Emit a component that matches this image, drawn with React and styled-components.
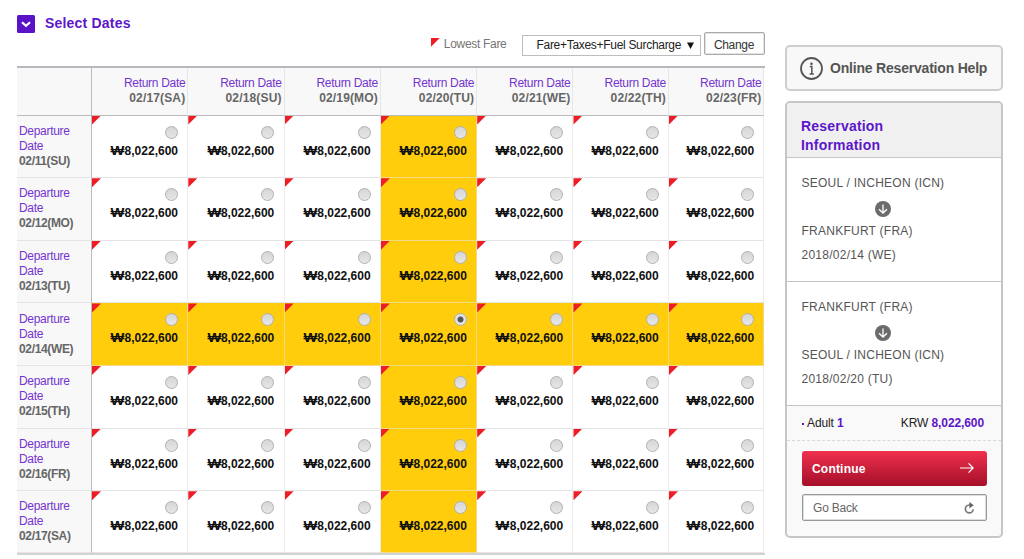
import React, { useState } from 'react';
import styled, { createGlobalStyle, css } from 'styled-components';

const GlobalStyle = createGlobalStyle`
  * {
    box-sizing: border-box;
  }
  body {
    margin: 0;
    background: #fff;
    font-family: "Liberation Sans", Arial, sans-serif;
    font-size: 12px;
    color: #555;
  }
  button {
    font-family: inherit;
    margin: 0;
  }
`;

const Page = styled.div`
  display: flex;
  align-items: flex-start;
  width: 1024px;
  height: 559px;
  padding-left: 17px;
  overflow: hidden;
`;

const Main = styled.main`
  width: 747.5px;
  padding-top: 15px;
`;

const Title = styled.h2`
  display: flex;
  align-items: center;
  gap: 10px;
  height: 17px;
  margin: 0;
  font-size: 14px;
  line-height: 17px;
  letter-spacing: 0.2px;
  color: #5c17c9;
`;

const TitleIcon = styled.svg`
  width: 18px;
  height: 18px;
`;

const Toolbar = styled.div`
  display: flex;
  justify-content: flex-end;
  align-items: flex-start;
  height: 34px;
`;

const Legend = styled.span`
  display: flex;
  gap: 4px;
  margin: 5px 15px 0 0;
  line-height: 14px;
  letter-spacing: -0.3px;
  color: #767676;
`;

const Corner = styled.i`
  width: 9px;
  height: 9px;
  background: #ee1c25;
  clip-path: polygon(0 0, 100% 0, 0 100%);
`;

const LegendCorner = styled(Corner)`
  margin-top: 1px;
`;

const Select = styled.button`
  display: flex;
  align-items: center;
  justify-content: space-between;
  width: 179px;
  height: 21px;
  margin: 3px 3px 0 0;
  padding: 0 6px 1px 14px;
  border: 1px solid #bdbdbd;
  background: #fff;
  font-size: 12px;
  letter-spacing: -0.3px;
  color: #222;
`;

const Arrow = styled.svg`
  width: 7px;
  height: 7px;
`;

const Change = styled.button`
  width: 61px;
  height: 23px;
  padding: 2px 0 0;
  border: 1px solid #aaa;
  border-radius: 2px;
  background: #fff;
  box-shadow: inset 0 0 0 1px #e4e4e4;
  font-size: 12px;
  line-height: 18px;
  letter-spacing: -0.3px;
  color: #333;
`;

const Grid = styled.div`
  display: grid;
  grid-template-columns: 75px repeat(5, 96.3px) repeat(2, 95.5px);
  grid-template-rows: 47.6px repeat(6, 62.6px) 61.4px;
  border-top: 2px solid #b7b7be;
  border-bottom: 2px solid #d2d2d2;
`;

const Label = styled.span`
  letter-spacing: -0.3px;
  color: #7434cf;
`;

const Day = styled.strong`
  letter-spacing: ${(props) => (props.$tight ? '-0.35px' : '0.15px')};
  color: #666;
`;

const ColHead = styled.div`
  display: flex;
  flex-direction: column;
  align-items: flex-end;
  padding: 7.5px 2px 0 0;
  border-right: 1px solid #e6e6e6;
  border-bottom: 1px solid #bbb;
  background: #f8f8f8;
  line-height: 15.5px;
`;

const Blank = styled(ColHead)`
  border-right-color: #bbb;
`;

const RowHead = styled.div`
  display: flex;
  flex-direction: column;
  padding: 8.3px 0 0 2px;
  border-right: 1px solid #bbb;
  border-bottom: 1px solid #e4e4e4;
  background: #f8f8f8;
  line-height: 15px;
`;

const Cell = styled.label`
  position: relative;
  display: flex;
  flex-direction: column;
  align-items: flex-end;
  padding: 10px 9.3px 0 0;
  border-right: 1px solid #ececec;
  border-bottom: 1px solid #e4e4e4;
  ${(props) => props.$active && css`
    border-right-color: #f3d985;
    border-bottom-color: #f3d985;
    background: #ffcd0c;
  `}
`;

const LowMark = styled(Corner)`
  position: absolute;
  top: 0;
  left: 0;
`;

const Radio = styled.input`
  appearance: none;
  width: 13px;
  height: 13px;
  margin: 0;
  border: 1px solid #b0b0b0;
  border-radius: 50%;
  background: linear-gradient(#d6d6d6, #e6e6e6);
  &:checked {
    background: radial-gradient(circle, #555 0 2.6px, #e2e2e2 3.4px);
  }
`;

const Price = styled.strong`
  margin-top: 4px;
  line-height: 16px;
  color: #111;
`;

const Won = styled.span`
  display: inline-block;
  transform: scaleX(1.22);
  transform-origin: right;
`;

const Side = styled.aside`
  display: flex;
  flex-direction: column;
  gap: 10px;
  width: 218px;
  margin: 45px 0 0 20.5px;
`;

const Help = styled.div`
  display: flex;
  align-items: center;
  gap: 7.5px;
  height: 46px;
  padding-left: 12.5px;
  border: 2px solid #cecece;
  border-radius: 5px;
  background: #f8f8f8;
  font-size: 14px;
  font-weight: bold;
  letter-spacing: -0.2px;
  white-space: nowrap;
  color: #555;
`;

const HelpIcon = styled.svg`
  flex: none;
  width: 23px;
  height: 23px;
`;

const Panel = styled.section`
  height: 437px;
  border: 2px solid #c6c6c6;
  border-radius: 5px;
  background: #f9f9f9;
  overflow: hidden;
`;

const PanelTitle = styled.h3`
  height: 55px;
  margin: 0;
  padding: 14px 14px 0;
  border-bottom: 1px solid #c6c6c6;
  background: #f0f0f0;
  font-size: 14px;
  line-height: 18.5px;
  letter-spacing: 0.2px;
  color: #5c17c9;
`;

const Leg = styled.div`
  display: flex;
  flex-direction: column;
  height: 124px;
  padding: 13px 14.5px 0;
  border-bottom: 1px solid #c6c6c6;
  background: #fff;
  line-height: 24px;
  letter-spacing: 0.25px;
  color: #555;
`;

const Down = styled.svg`
  width: 16px;
  height: 16px;
  margin: 6px 0 2px 73.5px;
`;

const Fare = styled.div`
  display: flex;
  justify-content: space-between;
  height: 35px;
  padding: 0 17px 0 14px;
  border-bottom: 1px dashed #d8d8d8;
  line-height: 35px;
  letter-spacing: -0.1px;
  color: #222;
`;

const Bullet = styled.i`
  display: inline-block;
  width: 2px;
  height: 2px;
  margin: 0 3px 2px 1px;
  background: #5c17c9;
`;

const Accent = styled.strong`
  color: #5c17c9;
`;

const Actions = styled.div`
  display: flex;
  flex-direction: column;
  gap: 8px;
  padding: 10px 14.5px;
`;

const Continue = styled.button`
  display: flex;
  align-items: center;
  justify-content: space-between;
  height: 35px;
  padding: 0 13px 0 10.5px;
  border: 0;
  border-radius: 3px;
  background: linear-gradient(#f0304e, #a50f29);
  font-size: 12px;
  font-weight: bold;
  letter-spacing: 0.2px;
  color: #fff;
`;

const Back = styled.button`
  display: flex;
  align-items: center;
  justify-content: space-between;
  height: 27px;
  padding: 0 11px 0 10.5px;
  border: 1px solid #999;
  border-radius: 2px;
  background: #fff;
  box-shadow: inset 0 0 0 1px #ddd;
  font-size: 12px;
  letter-spacing: -0.2px;
  color: #666;
`;

const returnDays = ['02/17(SA)', '02/18(SU)', '02/19(MO)', '02/20(TU)', '02/21(WE)', '02/22(TH)', '02/23(FR)'];
const departureDays = ['02/11(SU)', '02/12(MO)', '02/13(TU)', '02/14(WE)', '02/15(TH)', '02/16(FR)', '02/17(SA)'];

const legs = [
  { from: 'SEOUL / INCHEON (ICN)', to: 'FRANKFURT (FRA)', date: '2018/02/14 (WE)' },
  { from: 'FRANKFURT (FRA)', to: 'SEOUL / INCHEON (ICN)', date: '2018/02/20 (TU)' },
];

const FareTable = () => {
  const [selected, setSelected] = useState({ row: 3, col: 3 });

  return (
    <Grid>
      <Blank />
      {returnDays.map((day) => (
        <ColHead key={day}>
          <Label>Return Date</Label>
          <Day>{day}</Day>
        </ColHead>
      ))}
      {departureDays.map((departure, row) => (
        <React.Fragment key={departure}>
          <RowHead>
            <Label>Departure</Label>
            <Label>Date</Label>
            <Day $tight>{departure}</Day>
          </RowHead>
          {returnDays.map((day, col) => (
            <Cell key={day} $active={row === selected.row || col === selected.col}>
              <LowMark />
              <Radio
                type="radio"
                name="fare"
                checked={row === selected.row && col === selected.col}
                onChange={() => { setSelected({ row, col }); }}
              />
              <Price>
                <Won>₩</Won>
                8,022,600
              </Price>
            </Cell>
          ))}
        </React.Fragment>
      ))}
    </Grid>
  );
};

const Reservation = () => (
  <Panel>
    <PanelTitle>
      Reservation
      <br />
      Information
    </PanelTitle>
    {legs.map((leg) => (
      <Leg key={leg.date}>
        <span>{leg.from}</span>
        <Down viewBox="0 0 16 16" fill="none">
          <circle cx="8" cy="8" r="8" fill="#6b6b6b" />
          <path d="M8 3.5v8.3M4 8.2l4 3.8 4-3.8" stroke="#fff" strokeWidth="1.3" />
        </Down>
        <span>{leg.to}</span>
        <span>{leg.date}</span>
      </Leg>
    ))}
    <Fare>
      <span>
        <Bullet />
        {'Adult '}
        <Accent>1</Accent>
      </span>
      <span>
        {'KRW '}
        <Accent>8,022,600</Accent>
      </span>
    </Fare>
    <Actions>
      <Continue>
        Continue
        <svg width="14" height="11" viewBox="0 0 14 11" fill="none" stroke="#fff" strokeWidth="1.2">
          <path d="M0 5h13M8.5 0.3l4.7 4.7-4.7 4.7" />
        </svg>
      </Continue>
      <Back>
        Go Back
        <svg width="11" height="12" viewBox="0 0 11 12" fill="none">
          <path d="M6.5 3H5.2a3.9 3.9 0 1 0 4 4.2" stroke="#777" strokeWidth="1.7" />
          <path d="M5.4 0l4.3 3.2-4.3 3.2z" fill="#666" />
        </svg>
      </Back>
    </Actions>
  </Panel>
);

const App = () => (
  <>
    <GlobalStyle />
    <Page>
      <Main>
        <Title>
          <TitleIcon viewBox="0 0 18 18" fill="none">
            <rect width="18" height="18" rx="1.5" fill="#5a14c8" />
            <path d="M5 7.2l4 3.6 4-3.6" stroke="#fff" strokeWidth="2.2" />
          </TitleIcon>
          Select Dates
        </Title>
        <Toolbar>
          <Legend>
            <LegendCorner />
            Lowest Fare
          </Legend>
          <Select>
            Fare+Taxes+Fuel Surcharge
            <Arrow viewBox="0 0 7 7">
              <path d="M0 0.5h7L3.5 7z" fill="#111" />
            </Arrow>
          </Select>
          <Change>Change</Change>
        </Toolbar>
        <FareTable />
      </Main>
      <Side>
        <Help>
          <HelpIcon viewBox="0 0 23 23" fill="none">
            <circle cx="11.5" cy="11.5" r="10.5" stroke="#555" strokeWidth="1.8" />
            <circle cx="11.5" cy="6.7" r="1.3" fill="#555" />
            <path d="M9.8 9.6h2v7.5M9.6 17.1h4.2" stroke="#555" strokeWidth="1.5" />
          </HelpIcon>
          Online Reservation Help
        </Help>
        <Reservation />
      </Side>
    </Page>
  </>
);

export default App;
